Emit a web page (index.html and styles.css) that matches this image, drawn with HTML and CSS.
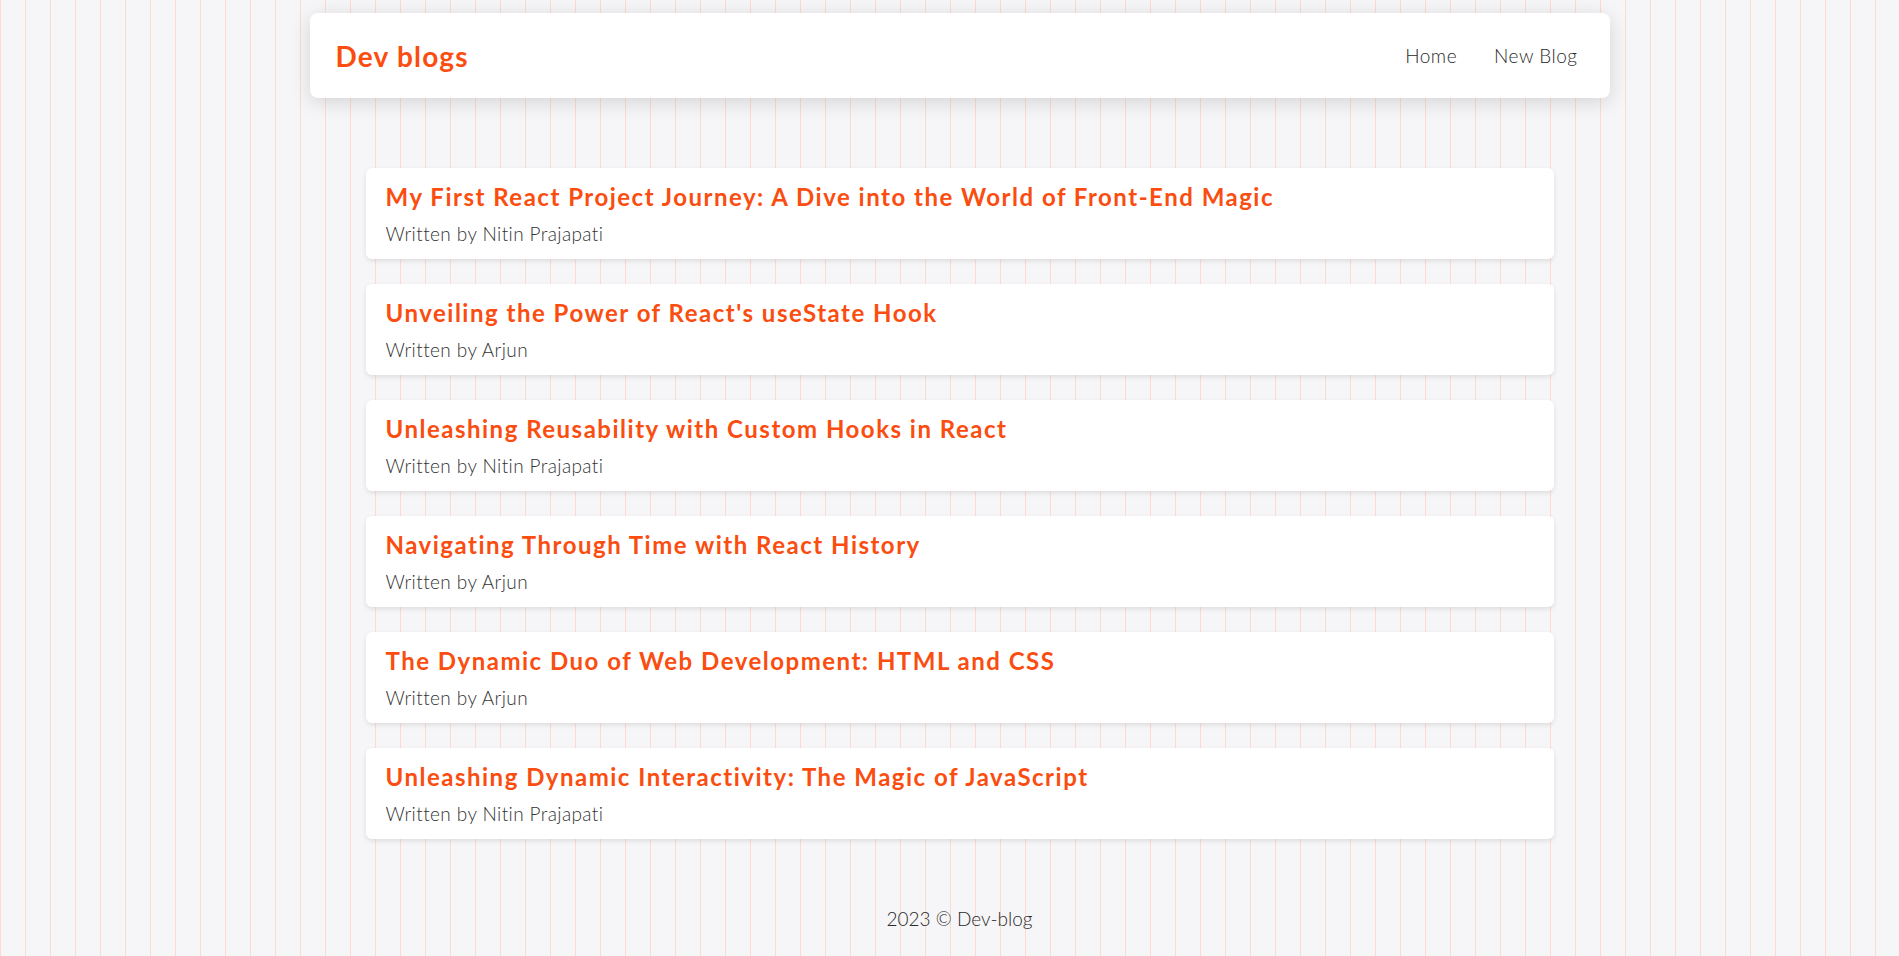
FILE: index.html
```html
<!DOCTYPE html>
<html lang="en">
<head>
<meta charset="utf-8">
<title>Dev blogs</title>
<link rel="stylesheet" href="styles.css">
</head>
<body>
<div class="page">
  <header class="navbar">
    <h1 class="logo">Dev blogs</h1>
    <nav class="links">
      <a href="#">Home</a>
      <a href="#">New Blog</a>
    </nav>
  </header>
  <main class="blog-list">
    <article class="blog-preview">
      <h2>My First React Project Journey: A Dive into the World of Front-End Magic</h2>
      <p>Written by Nitin Prajapati</p>
    </article>
    <article class="blog-preview">
      <h2>Unveiling the Power of React's useState Hook</h2>
      <p>Written by Arjun</p>
    </article>
    <article class="blog-preview">
      <h2>Unleashing Reusability with Custom Hooks in React</h2>
      <p>Written by Nitin Prajapati</p>
    </article>
    <article class="blog-preview">
      <h2>Navigating Through Time with React History</h2>
      <p>Written by Arjun</p>
    </article>
    <article class="blog-preview">
      <h2>The Dynamic Duo of Web Development: HTML and CSS</h2>
      <p>Written by Arjun</p>
    </article>
    <article class="blog-preview">
      <h2>Unleashing Dynamic Interactivity: The Magic of JavaScript</h2>
      <p>Written by Nitin Prajapati</p>
    </article>
  </main>
  <footer class="footer">2023 © Dev-blog</footer>
</div>
</body>
</html>
```

FILE: styles.css
```css
html {
  background-color: #f6f6f8;
  background-image: linear-gradient(90deg, #fddccf 1px, transparent 1px);
  background-size: 25px 100%;
  min-height: 100%;
}

body {
  margin: 0;
  padding: 0 0 0 20px;
  font-family: "Lato", "Open Sans", sans-serif;
  color: #333;
}

.page {
  max-width: 1300px;
  margin: 0 auto;
  padding-top: 13px;
}

.navbar {
  display: flex;
  align-items: center;
  justify-content: space-between;
  height: 85px;
  padding: 0 32px 0 26px;
  background: #fff;
  border-radius: 8px;
  box-shadow: 0 4px 20px rgba(0, 0, 0, 0.14);
}

.logo {
  margin: 0;
  font-size: 28px;
  font-weight: 700;
  color: #fa4d0f;
  letter-spacing: 1.2px;
}

.links {
  display: flex;
  gap: 37px;
}

.links a {
  text-decoration: none;
  color: #2a2a2a;
  font-size: 19px;
  font-weight: 300;
  letter-spacing: 0.5px;
}

.blog-list {
  display: flex;
  flex-direction: column;
  gap: 25px;
  margin: 70px 56px 0;
}

.blog-preview {
  background: #fff;
  border-radius: 6px;
  padding: 14px 20px 13px;
  box-shadow: 0 2px 5px rgba(0, 0, 0, 0.1);
}

.blog-preview h2 {
  margin: 0 0 10px;
  font-size: 24px;
  line-height: 30px;
  font-weight: 700;
  color: #fa4d0f;
  letter-spacing: 1.5px;
}

.blog-preview p {
  margin: 0;
  font-size: 19px;
  line-height: 24px;
  font-weight: 300;
  color: #333;
  letter-spacing: 0.4px;
}

.footer {
  margin-top: 68px;
  text-align: center;
  font-size: 19px;
  line-height: 24px;
  font-weight: 300;
  color: #2a2a2a;
  padding-bottom: 20px;
}
```
